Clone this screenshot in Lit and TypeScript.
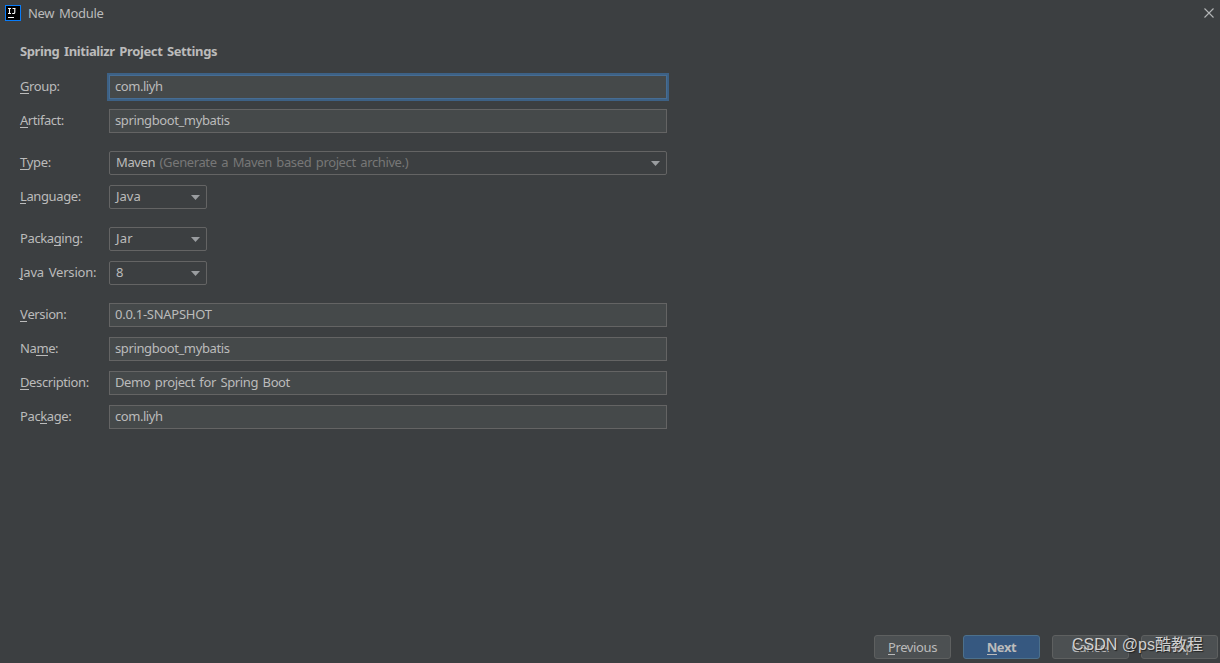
import { LitElement, html, css } from "lit";
import { customElement, property } from "lit/decorators.js";

@customElement("mnemonic-text")
class MnemonicText extends LitElement {
  @property() text = "";
  @property({ type: Number }) at = 0;
  static styles = css`
    :host { display: inline-block; white-space: pre; }
    .key { position: relative; }
    .key::after { content: ""; position: absolute; left: 0; right: 0; bottom: 1px; height: 1px; background: currentColor; }
  `;
  render() {
    const { text, at } = this;
    return html`${text.slice(0, at)}<span class="key">${text[at]}</span>${text.slice(at + 1)}`;
  }
}

interface Row {
  label: string;
  key: number;
  kind: "field" | "combo";
  value: string;
  hint?: string;
  small?: boolean;
  focused?: boolean;
  labelSpacing?: number;
  valueSpacing?: number;
}

const TRACKING = -0.39;

const groups: Row[][] = [
  [
    { label: "Group:", key: 0, kind: "field", value: "com.liyh", focused: true, valueSpacing: -0.45 },
    { label: "Artifact:", key: 0, kind: "field", value: "springboot_mybatis", labelSpacing: -0.45 },
  ],
  [
    { label: "Type:", key: 0, kind: "combo", value: "Maven", hint: "(Generate a Maven based project archive.)" },
    { label: "Language:", key: 0, kind: "combo", value: "Java", small: true, valueSpacing: 0 },
  ],
  [
    { label: "Packaging:", key: 5, kind: "combo", value: "Jar", small: true, valueSpacing: 0.2 },
    { label: "Java Version:", key: 0, kind: "combo", value: "8", small: true, labelSpacing: -0.2 },
  ],
  [
    { label: "Version:", key: 0, kind: "field", value: "0.0.1-SNAPSHOT", valueSpacing: -0.27 },
    { label: "Name:", key: 2, kind: "field", value: "springboot_mybatis" },
    { label: "Description:", key: 0, kind: "field", value: "Demo project for Spring Boot" },
    { label: "Package:", key: 3, kind: "field", value: "com.liyh", valueSpacing: -0.45 },
  ],
];

@customElement("app-root")
class AppRoot extends LitElement {
  static styles = css`
    :host {
      display: flex; flex-direction: column; position: relative; box-sizing: border-box;
      width: 1220px; height: 663px; overflow: hidden;
      background: #3c3f41; color: #bbbbbb;
      font: 13px/18px "Noto Sans", "Noto Sans CJK SC", sans-serif;
      letter-spacing: -0.39px; word-spacing: 1.6px;
    }
    * { box-sizing: border-box; }
    .title { display: flex; align-items: center; height: 26px; padding: 0 5px; flex: none; }
    .title span { margin-left: 7px; flex: 1; letter-spacing: -0.3px; }
    .title svg { display: block; }
    .body { padding: 16px 20px 0; flex: 1; }
    .heading { font-weight: 700; height: 18px; margin-bottom: 15px; white-space: pre; }
    .form { display: flex; flex-direction: column; gap: 18px; }
    .group { display: flex; flex-direction: column; gap: 10px; }
    .row { display: flex; align-items: center; height: 24px; }
    .label { width: 89px; flex: none; white-space: pre; padding-bottom: 2px; }
    .field, .combo { width: 558px; height: 24px; border: 1px solid #646464; display: flex; align-items: center; padding: 0 5px; white-space: pre; }
    .field span, .combo span { padding-bottom: 2px; }
    .field { background: #45494a; }
    .field.focused { border-color: #466d94; box-shadow: 0 0 0 2px #3d6185; }
    .combo { border-radius: 2px; padding: 0 6px; }
    .combo.small { width: 98px; }
    .hint { color: #777777; margin-left: 4.5px; }
    .arrow { margin-left: auto; display: block; }
    .footer { display: flex; justify-content: flex-end; gap: 12px; padding: 0 2px 4px 0; flex: none; }
    .button { width: 77px; height: 24px; border: 1px solid #5e6060; border-radius: 3px; background: #4c5052; display: flex; align-items: center; justify-content: center; }
    .button.primary { background: #365880; border-color: #4c708c; font-weight: 700; }
    .watermark { position: absolute; left: 1072px; top: 633px; font: 16px/24px "Liberation Sans", "Noto Sans CJK SC", sans-serif; letter-spacing: 0; word-spacing: 0; color: #d0d0d0; text-shadow: 1px 1px 1px #222; white-space: pre; }
  `;

  private row(r: Row) {
    return html`<div class="row">
      <mnemonic-text class="label" .text=${r.label} .at=${r.key} style="letter-spacing:${r.labelSpacing ?? TRACKING}px"></mnemonic-text>
      <div class="${r.kind} ${r.small ? "small" : ""} ${r.focused ? "focused" : ""}"><span style="letter-spacing:${r.valueSpacing ?? TRACKING}px">${r.value}</span>${r.hint ? html`<span class="hint">${r.hint}</span>` : ""}${r.kind === "combo"
        ? html`<svg class="arrow" width="9" height="5" viewBox="0 0 9 5"><path d="M0 0H9L4.5 5Z" fill="#9a9da0" /></svg>`
        : ""}</div>
    </div>`;
  }

  render() {
    return html`
      <div class="title">
        <svg width="16" height="16" viewBox="0 0 16 16">
          <rect width="16" height="16" fill="#087cfa" /><rect x="1" y="1" width="14" height="14" fill="#000" />
          <path d="M3 3.5H6M4.5 3.5V8.5M3 8.5H6M7.5 3.5H10.5M9.8 3.5V7.2Q9.8 8.5 8.7 8.5H7.2" stroke="#fff" stroke-width="1.1" fill="none" />
          <rect x="3" y="12" width="6" height="1" fill="#fff" />
        </svg>
        <span>New Module</span>
        <svg width="12" height="12" viewBox="0 0 12 12"><path d="M1.5 1.5L10.5 10.5M10.5 1.5L1.5 10.5" stroke="#b4b6b7" stroke-width="1.1" /></svg>
      </div>
      <div class="body">
        <div class="heading">Spring Initializr Project Settings</div>
        <div class="form">${groups.map((g) => html`<div class="group">${g.map((r) => this.row(r))}</div>`)}</div>
      </div>
      <div class="footer">
        <div class="button"><mnemonic-text text="Previous"></mnemonic-text></div>
        <div class="button primary"><mnemonic-text text="Next"></mnemonic-text></div>
        <div class="button">Cancel</div>
        <div class="button">Help</div>
      </div>
      <div class="watermark">CSDN @ps酷教程</div>
    `;
  }
}
